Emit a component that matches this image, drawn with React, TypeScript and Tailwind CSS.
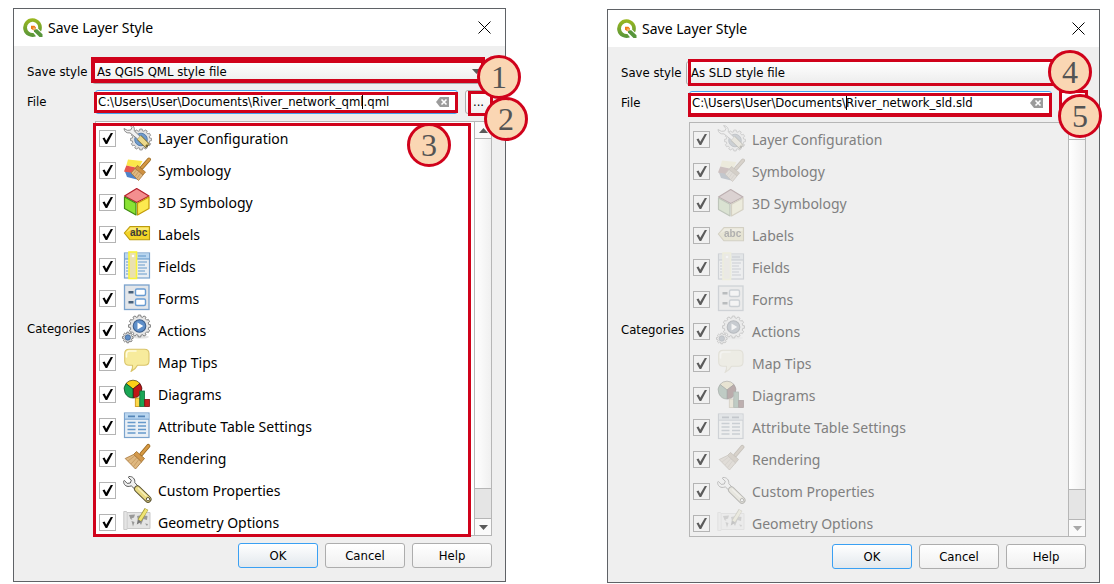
import { useId, useState, type ReactNode } from "react";

function gearPath(cx: number, cy: number, outer: number, inner: number, teeth: number) {
  const points: string[] = [];
  const step = (Math.PI * 2) / teeth;
  for (let i = 0; i < teeth; i++) {
    const a = i * step;
    [
      [a - step * 0.3, inner],
      [a - step * 0.22, outer],
      [a + step * 0.22, outer],
      [a + step * 0.3, inner],
    ].forEach(([angle, r]) => {
      points.push(`${(cx + Math.cos(angle) * r).toFixed(2)},${(cy + Math.sin(angle) * r).toFixed(2)}`);
    });
  }
  return `M${points.join("L")}Z`;
}

function Glyph({ children }: { children: ReactNode }) {
  return (
    <svg viewBox="0 0 28 28" className="size-7 shrink-0 overflow-visible" aria-hidden="true">
      {children}
    </svg>
  );
}

function Wrench() {
  return (
    <>
      <path
        d="M.6 5.4C.6 8.600 3 10.800 6.200 10.400L8.300 9.900 13.200 14.400 16.200 11.400 11.800 6.600C12.200 3 9.800.2 6 .5L5.200 1.300 8.300 4.200 7.300 7 4.200 7.400 1.300 4.400Z"
        fill="#f0f0f0"
        stroke="#5c5c5c"
        strokeWidth="1"
        strokeLinejoin="round"
      />
      <path d="M14.500 13 25 23.200" stroke="#5b5330" strokeWidth="7" strokeLinecap="round" />
      <path d="M14.500 13 25 23.200" stroke="#e9da83" strokeWidth="5.200" strokeLinecap="round" />
      <path d="M15 12 23.500 20.300" stroke="#f7f0bd" strokeWidth="1.400" />
      <circle cx="25" cy="23.200" r="1.700" fill="#fff" stroke="#5b5330" strokeWidth="1" />
    </>
  );
}

const layerConfigurationIcon = (
  <Glyph>
    <path d={gearPath(18, 15.5, 10.5, 8.8, 12)} fill="#e4e4e4" stroke="#8b8b8b" strokeWidth=".9" />
    <circle cx="18" cy="15.500" r="6.300" fill="#6f9bcd" stroke="#4f76a3" strokeWidth=".9" />
    <path
      d="M1 4.500C1.200 7.700 3.600 9.300 7 8.900L14.800 15.200 17.200 12.400 11.200 6.800C12 3.600 10 .7 6.600.6L9 3.600 7.600 6.100 4.300 6.300Z"
      fill="#f1f1f1"
      stroke="#7c7c7c"
      strokeWidth=".9"
      strokeLinejoin="round"
    />
    <path d="M16 13.500 24.800 22.200" stroke="#6e6332" strokeWidth="6" />
    <path d="M16 13.500 24.300 21.700" stroke="#ecd98a" strokeWidth="4.600" />
    <path d="M22 22.600 25 19.400" stroke="#8a7a38" strokeWidth="1" />
    <circle cx="24" cy="21.900" r="1" fill="#5d5124" />
  </Glyph>
);

const symbologyIcon = (
  <Glyph>
    <path d="M5 3.500 19.500 5 16 12 3.300 9.500Z" fill="#fbe74a" />
    <path d="M3.300 9.500 15 12 10 18.500 1 15.500Z" fill="#e5574f" />
    <path d="M2 15.800 11 17 14 23.500 4 21Z" fill="#4e83c9" />
    <path d="M26 3.500 19 11.500" stroke="#9b6a22" strokeWidth="4" strokeLinecap="round" />
    <path d="M26 3.500 19 11.500" stroke="#d79a44" strokeWidth="2.400" strokeLinecap="round" />
    <path d="M14.500 9.500 22.500 16 20 19 12 12.500Z" fill="#cf9040" stroke="#9b6a22" strokeWidth=".7" />
    <path d="M12 12.500 20 19 15.500 24.500 8 17Z" fill="#dfb880" stroke="#a7763a" strokeWidth=".8" />
    <path d="M13.500 14 10 18.500M15.500 15.800 12 20.500M17.500 17.500 14 22.500" stroke="#b98a50" strokeWidth=".6" />
  </Glyph>
);

const cubeIcon = (
  <Glyph>
    <path d="M13.700.5 26 8 13.700 14.500 1.500 8Z" fill="#f48f8f" stroke="#b5202c" strokeWidth="1.200" strokeLinejoin="round" />
    <path d="M1.500 9 13 15.200V27L1.500 20.500Z" fill="#8ae234" stroke="#3f8a12" strokeWidth="1.200" strokeLinejoin="round" />
    <path d="M26 9 14.500 15.200V27L26 20.500Z" fill="#fce94f" stroke="#c29a08" strokeWidth="1.200" strokeLinejoin="round" />
  </Glyph>
);

const labelsIcon = (
  <Glyph>
    <path d="M1.300 13 7 6.500H26.500V19.800H7Z" fill="#f3d427" stroke="#bb9a0e" strokeWidth="1.100" strokeLinejoin="round" />
    <path d="M3 12.500 7.500 7.600H25.500V10H8Z" fill="#faea7c" />
    <text x="15.600" y="16.300" textAnchor="middle" fontSize="10" fontWeight="700" fontFamily="Liberation Sans, sans-serif" fill="#3b3b3b">
      abc
    </text>
  </Glyph>
);

const fieldsIcon = (
  <Glyph>
    <rect x="1.500" y="1" width="25" height="25" fill="#e9eef3" stroke="#7ba3cd" strokeWidth="1.200" />
    <path d="M2 1.500H26V7H2Z" fill="#b9d6f0" />
    <path d="M2 7H26.500M15 4H23" stroke="#5f93c6" strokeWidth="1.200" />
    <path d="M15 10H24M15 13H22M15 16H24M15 19H22M15 22H24M3 10H5.500M3 13H5.500M3 16H5.500M3 19H5.500M3 22H5.500" stroke="#6699cb" strokeWidth="1.100" />
    <rect x="6" y="0" width="7.500" height="26.500" fill="#ebe1ae" stroke="#f8f33c" strokeWidth="1.600" />
    <circle cx="10" cy="4" r="1.300" fill="#fff" />
  </Glyph>
);

const formsIcon = (
  <Glyph>
    <rect x="1.500" y="1" width="24.500" height="24.500" fill="#e3e6e9" stroke="#7ba3cd" strokeWidth="1.300" />
    <rect x="12.500" y="5" width="10" height="6.500" rx="1.500" fill="#fff" stroke="#6a9dd2" strokeWidth="1.400" />
    <rect x="12.500" y="15" width="10" height="6.500" rx="1.500" fill="#fff" stroke="#6a9dd2" strokeWidth="1.400" />
    <path d="M5.500 8.200H10.500M5.500 18.200H10.500" stroke="#47617c" strokeWidth="2.400" />
  </Glyph>
);

const actionsIcon = (
  <Glyph>
    <ellipse cx="18" cy="21" rx="8" ry="1.600" fill="#e3e3e3" />
    <path d={gearPath(16.5, 10, 11, 9.3, 12)} fill="#e6e6e6" stroke="#777" strokeWidth=".9" />
    <circle cx="16.500" cy="10" r="6.300" fill="#5f8fc9" stroke="#3c5f8d" strokeWidth="1.100" />
    <path d="M14.500 6.500 20.300 10 14.500 13.500Z" fill="#fff" />
    <path d={gearPath(4.8, 21.5, 5.4, 4.3, 8)} fill="#dedede" stroke="#777" strokeWidth=".9" />
    <circle cx="4.800" cy="21.500" r="2.700" fill="#5f8fc9" stroke="#3c5f8d" strokeWidth=".7" />
  </Glyph>
);

const mapTipsIcon = (
  <Glyph>
    <path
      d="M6 1.200H21.500Q26 1.200 26 5.500V13Q26 17.300 21.500 17.300H14.500Q12.500 21.500 8 23.500 10 20.500 9.500 17.300H6Q1.700 17.300 1.700 13V5.500Q1.700 1.200 6 1.200Z"
      fill="#f7eb9c"
      stroke="#d9c469"
      strokeWidth="1.100"
      strokeLinejoin="round"
    />
    <path d="M3.500 9V6Q3.500 3 6.500 3H13" fill="none" stroke="#fffce0" strokeWidth="1.600" strokeLinecap="round" />
  </Glyph>
);

const diagramsIcon = (
  <Glyph>
    <path d="M10 9 3 3.500A9 9 0 0 1 17 3.500Z" fill="#fcd116" stroke="#473c0c" strokeWidth=".7" />
    <path d="M10 9 17 3.500A9 9 0 0 1 10 18Z" fill="#c01515" stroke="#3b0b0b" strokeWidth=".7" />
    <path d="M10 9V18A9 9 0 0 1 3 3.500Z" fill="#1aa655" stroke="#0b3c20" strokeWidth=".7" />
    <rect x="12.300" y="18" width="4.500" height="8.500" fill="#fcd84a" stroke="#c58d10" strokeWidth=".8" />
    <rect x="16.800" y="11" width="4.700" height="15.500" fill="#1aa655" stroke="#0d7038" strokeWidth=".8" />
    <rect x="21.700" y="19.500" width="4.700" height="7" fill="#c42020" stroke="#7d1010" strokeWidth=".8" />
  </Glyph>
);

const attributeTableIcon = (
  <Glyph>
    <rect x="1.500" y="1" width="24.500" height="24.500" fill="#eaf0f6" stroke="#7ba3cd" strokeWidth="1.200" />
    <path d="M2 1.500H25.500V7H2Z" fill="#b9d6f0" />
    <path d="M1.500 7.200H26" stroke="#6f9fd0" strokeWidth="1" />
    <path d="M5 4.300H12M15 4.300H22" stroke="#5485b8" strokeWidth="1.700" />
    <path d="M4.500 10.500H12.500M4.500 14H12.500M4.500 17.500H12.500M4.500 21H12.500M15 10.500H23M15 14H23M15 17.500H23M15 21H23" stroke="#6699cb" strokeWidth="1.300" />
  </Glyph>
);

const brushIcon = (
  <Glyph>
    <path d="M25.300 2 18.500 10" stroke="#9b6a22" strokeWidth="4.200" strokeLinecap="round" />
    <path d="M25.300 2 18.500 10" stroke="#d79a44" strokeWidth="2.500" strokeLinecap="round" />
    <path d="M13.500 7.500 21.500 14.500 18.500 18 10.500 10.500Z" fill="#d4994c" stroke="#9b6a22" strokeWidth=".8" />
    <path d="M10.500 10.500 18.500 18 12.500 25 2.200 14.500Z" fill="#dfb880" stroke="#a7763a" strokeWidth=".8" />
    <path d="M11.500 12 5 17M13.500 14 8 20M15.500 16 10.500 22.500" stroke="#b98a50" strokeWidth=".6" />
  </Glyph>
);

const customPropertiesIcon = (
  <Glyph>
    <Wrench />
  </Glyph>
);

const geometryIcon = (
  <Glyph>
    <path d="M.8 3.500H3.500L4 4.500H27V20.500H4.500L4 21.500H.8Z" fill="#e4e4e4" stroke="#c4c4c4" strokeWidth=".9" />
    <path d="M4.200 4V21" stroke="#c9c9c9" strokeWidth=".8" />
    <path d="M6 7 12 6.500 11 9.500 8.500 10.500 9.500 12 7.500 11ZM8.500 13 11.500 14 10 18.500ZM14 8 19 7 24.500 8 24 12 20.500 11 18 17 15 12ZM22 15.500 25 16 24 18Z" fill="#999" />
    <path d="M23.500 1 16.500 12.500" stroke="#a39a3a" strokeWidth="4.200" />
    <path d="M23.500 1.500 16.700 12.300" stroke="#efe474" strokeWidth="2.800" />
    <path d="M14.800 11.500 18.300 13.700 13.800 16.500Z" fill="#777" />
  </Glyph>
);

const categories: { name: string; icon: ReactNode }[] = [
  { name: "Layer Configuration", icon: layerConfigurationIcon },
  { name: "Symbology", icon: symbologyIcon },
  { name: "3D Symbology", icon: cubeIcon },
  { name: "Labels", icon: labelsIcon },
  { name: "Fields", icon: fieldsIcon },
  { name: "Forms", icon: formsIcon },
  { name: "Actions", icon: actionsIcon },
  { name: "Map Tips", icon: mapTipsIcon },
  { name: "Diagrams", icon: diagramsIcon },
  { name: "Attribute Table Settings", icon: attributeTableIcon },
  { name: "Rendering", icon: brushIcon },
  { name: "Custom Properties", icon: customPropertiesIcon },
  { name: "Geometry Options", icon: geometryIcon },
];

function QgisLogo() {
  const id = useId();
  return (
    <svg viewBox="0 0 20 20" className="size-5 shrink-0" aria-hidden="true">
      <defs>
        <linearGradient id={id} x1="0" y1="0" x2="0" y2="1">
          <stop offset="0" stopColor="#9cb81f" />
          <stop offset="1" stopColor="#57953a" />
        </linearGradient>
      </defs>
      <path
        fillRule="evenodd"
        fill={`url(#${id})`}
        d="M9.500.3A9.300 9.300 0 1 0 13 18.200L10.400 15A5.600 5.600 0 1 1 15.100 10.500L18 13.500A9.300 9.300 0 0 0 9.500.3Z"
      />
      <path d="M11 11.200H14.200L19.500 16.300V19H16.500L11 13.600Z" fill="#57953a" />
      <path d="M8 7.800H11.400L13 9.400V11H11L10.800 12.600 8 10.800Z" fill="#ee7913" />
      <path d="M9.500 9.500H12.500L13 10.800 10.800 12.600Z" fill="#f6b26b" />
    </svg>
  );
}

function Highlight({ className }: { className: string }) {
  return <span aria-hidden="true" className={`pointer-events-none absolute z-10 border-[#d0021b] ${className}`} />;
}

function Badge({ value, className }: { value: number; className: string }) {
  return (
    <span
      className={`absolute z-20 flex size-11 items-center justify-center rounded-full border-3 border-[#d0021b] bg-[#fad6b3] font-['Liberation_Serif',serif] text-[32px] leading-none text-[#545454] ${className}`}
    >
      {value}
    </span>
  );
}

function CategoryItem({ name, icon, disabled }: { name: string; icon: ReactNode; disabled: boolean }) {
  const [checked, setChecked] = useState(true);
  return (
    <li>
      <label className="flex h-8 items-center gap-[7px] pl-[3px]">
        <span className="grid size-[17px] shrink-0 place-items-center">
          <input
            type="checkbox"
            checked={checked}
            disabled={disabled}
            onChange={(e) => setChecked(e.target.checked)}
            className="col-start-1 row-start-1 size-[17px] appearance-none border border-[#b4b4b4] bg-white disabled:bg-[#f1f1f1]"
          />
          {checked && (
            <svg
              viewBox="0 0 17 17"
              aria-hidden="true"
              className={`pointer-events-none col-start-1 row-start-1 size-[17px] ${disabled ? "text-[#5c5c5c]" : "text-black"}`}
            >
              <path d="M3.500 8.300 5.600 7.600 7.200 10.800 11.800 3H14L8.200 14H6.600Z" fill="currentColor" />
            </svg>
          )}
        </span>
        <span className={disabled ? "opacity-35 saturate-[0.25]" : ""}>{icon}</span>
        <span className={`pt-0.5 text-[14px] leading-5 ${disabled ? "text-[#808080]" : "text-black"}`}>{name}</span>
      </label>
    </li>
  );
}

function ScrollBar({ disabled }: { disabled: boolean }) {
  const arrow = disabled ? "#a8a8a8" : "#5a5a5a";
  return (
    <div className="flex w-[17px] shrink-0 flex-col border-l border-[#b6b6b6] bg-[#e5e5e5]">
      <button type="button" aria-label="Scroll up" disabled={disabled} className="flex h-4 items-center justify-center bg-[#fafafa]">
        <svg viewBox="0 0 9 5" className="h-[5px] w-[9px]">
          <path d="M0 5H9L4.500 0Z" fill={arrow} />
        </svg>
      </button>
      <div className="flex-1 border-y border-[#b6b6b6] bg-linear-to-r from-white to-[#f0f0f0]" />
      <div className="h-[29px]" />
      <button
        type="button"
        aria-label="Scroll down"
        disabled={disabled}
        className="flex h-[17px] items-center justify-center border-t border-[#b6b6b6] bg-[#fafafa]"
      >
        <svg viewBox="0 0 9 5" className="h-[5px] w-[9px]">
          <path d="M0 0H9L4.500 5Z" fill={arrow} />
        </svg>
      </button>
    </div>
  );
}

type Marks = {
  style: string;
  styleBadge: string;
  file: string;
  browse: string;
  browseBadge: string;
  list?: string;
  caret: string;
};

type DialogProps = {
  format: string;
  path: string;
  disabled: boolean;
  firstNumber: number;
  marks: Marks;
};

function SaveStyleDialog({ format, path, disabled, firstNumber, marks }: DialogProps) {
  const id = useId();
  const [file, setFile] = useState(path);
  return (
    <section aria-label="Save Layer Style" className="border border-[#5f6266] bg-[#efefef] text-[13px] text-black">
      <header className="flex h-[37px] items-center bg-white pr-[14px] pl-[9px]">
        <QgisLogo />
        <h1 className="ml-[5px] flex-1 text-[14px] leading-5">Save Layer Style</h1>
        <button type="button" aria-label="Close" className="size-[13px]">
          <svg viewBox="0 0 13 13" className="size-[13px]">
            <path d="M.5.5 12.500 12.500M12.500.5.5 12.500" stroke="#000" strokeWidth="1" />
          </svg>
        </button>
      </header>

      <form className="px-[13px] pt-[14px] pb-[13px] font-['DejaVu_Sans_Condensed','DejaVu_Sans',sans-serif]" onSubmit={(e) => e.preventDefault()}>
        <div className="grid grid-cols-[65px_minmax(0,1fr)] items-center">
          <label htmlFor={`${id}-style`}>Save style</label>
          <div className="relative">
            <select
              id={`${id}-style`}
              className="block h-6 w-full appearance-none rounded-[3px] border border-[#adadad] bg-linear-to-b from-white to-[#ececec] pl-1"
            >
              <option>{format}</option>
            </select>
            <svg viewBox="0 0 9 5" className="pointer-events-none absolute top-[9px] right-[11px] h-[5px] w-[9px]" aria-hidden="true">
              <path d="M0 0H9L4.500 5Z" fill="#5a5a5a" />
            </svg>
            <Highlight className={marks.style} />
            <Badge value={firstNumber} className={marks.styleBadge} />
          </div>

          <label htmlFor={`${id}-file`} className="mt-[6px]">
            File
          </label>
          <div className="mt-[6px] flex gap-[7px] pl-[3px]">
            <div className="relative min-w-0 flex-1">
              <input
                id={`${id}-file`}
                type="text"
                value={file}
                onChange={(e) => setFile(e.target.value)}
                className="block h-6 w-full rounded-[3px] border border-[#45a5f0] bg-white pr-6 pb-0.5 pl-0.5"
              />
              <span aria-hidden="true" className={`pointer-events-none absolute top-[5px] h-[14px] w-px bg-black ${marks.caret}`} />
              <button type="button" aria-label="Clear" className="absolute top-[6px] right-2 h-3 w-[14px]" onClick={() => setFile("")}>
                <svg viewBox="0 0 14 12" className="h-3 w-[14px]">
                  <path d="M0 6 4 1H13V11H4Z" fill="#9b9b9b" />
                  <path d="M5.500 3.500 10.500 8.500M10.500 3.500 5.500 8.500" stroke="#fff" strokeWidth="1.600" />
                </svg>
              </button>
              <Highlight className={marks.file} />
            </div>
            <div className="relative w-[27px]">
              <button
                type="button"
                aria-label="Browse"
                className="h-6 w-full rounded-[3px] border border-[#adadad] bg-linear-to-b from-white to-[#f0f0f0] text-center"
              >
                ...
              </button>
              <Highlight className={marks.browse} />
              <Badge value={firstNumber + 1} className={marks.browseBadge} />
            </div>
          </div>

          <span id={`${id}-categories`} className="mt-[7px]">
            Categories
          </span>
          <div className="mt-[7px] pl-[3px]">
            <div
              role="group"
              aria-labelledby={`${id}-categories`}
              className={`relative flex h-[415px] border border-[#b6b6b6] font-['Noto_Sans',sans-serif] ${disabled ? "bg-[#efefef]" : "bg-white"}`}
            >
              <ul className="flex-1 overflow-hidden">
                {categories.map((c) => (
                  <CategoryItem key={c.name} name={c.name} icon={c.icon} disabled={disabled} />
                ))}
              </ul>
              <ScrollBar disabled={disabled} />
              {marks.list && (
                <>
                  <Highlight className={marks.list} />
                  <Badge value={firstNumber + 2} className="top-px right-10" />
                </>
              )}
            </div>
          </div>
        </div>

        <div className="mt-[7px] flex justify-end gap-[7px]">
          <button type="submit" className="h-[25px] w-20 rounded-[3px] border border-[#3aa0f3] bg-linear-to-b from-white to-[#e2e8ed]">
            OK
          </button>
          <button type="button" className="h-[25px] w-20 rounded-[3px] border border-[#adadad] bg-linear-to-b from-white to-[#f0f0f0]">
            Cancel
          </button>
          <button type="button" className="h-[25px] w-20 rounded-[3px] border border-[#adadad] bg-linear-to-b from-white to-[#f0f0f0]">
            Help
          </button>
        </div>
      </form>
    </section>
  );
}

export default function App() {
  return (
    <main className="grid min-h-screen grid-cols-2 items-start gap-x-[101px] bg-white pr-[14px] pl-[13px] font-['Noto_Sans',sans-serif]">
      <div className="pt-2">
        <SaveStyleDialog
          format="As QGIS QML style file"
          path="C:\Users\User\Documents\River_network_qml.qml"
          disabled={false}
          firstNumber={1}
          marks={{
            style: "-top-[3px] -left-px right-[7px] bottom-px border-4 border-t-[6px]",
            styleBadge: "-top-[5px] -right-[29px]",
            file: "top-0.5 right-0 bottom-px -left-px border-3",
            browse: "top-px -right-px -bottom-0.5 left-[3px] border-3",
            browseBadge: "top-[7px] -right-9",
            list: "top-px right-5 -bottom-0.5 -left-[3px] border-3",
            caret: "left-[267px]",
          }}
        />
      </div>
      <div className="pt-[9px]">
        <SaveStyleDialog
          format="As SLD style file"
          path="C:\Users\User\Documents\River_network_sld.sld"
          disabled
          firstNumber={4}
          marks={{
            style: "-top-0.5 right-[30px] -bottom-px left-0.5 border-3",
            styleBadge: "-top-[11px] -right-[6px]",
            file: "top-0.5 right-0 -bottom-0.5 -left-px border-3 border-b-4",
            browse: "-top-px -right-0.5 bottom-0 left-0 border-3",
            browseBadge: "top-[3px] -right-4",
            caret: "left-[157px]",
          }}
        />
      </div>
    </main>
  );
}
